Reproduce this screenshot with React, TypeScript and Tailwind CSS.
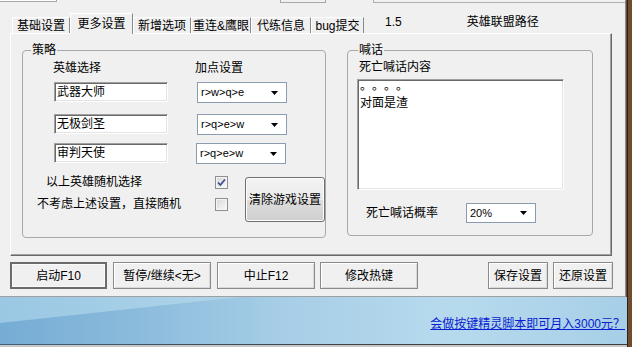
import React from 'react';

const font = "font-[family-name:'Liberation_Sans','Noto_Sans_CJK_SC',sans-serif]";

const sunken =
  'bg-white border-t border-l border-t-[#a0a0a0] border-l-[#a0a0a0] border-b border-r border-b-white border-r-white shadow-[inset_1px_1px_0_#696969,inset_-1px_-1px_0_#e3e3e3]';

const Combo: React.FC<{ value: string; className?: string }> = ({ value, className = '' }) => (
  <div className={`flex items-center justify-between bg-white border border-[#8a9cb0] pl-[3px] pr-[8px] text-[11px] leading-none ${className}`}>
    <span>{value}</span>
    <svg width="7" height="4" viewBox="0 0 7 4">
      <path d="M0 0h7L3.5 4z" fill="#000" />
    </svg>
  </div>
);

const Edit: React.FC<{ value: string; className?: string }> = ({ value, className = '' }) => (
  <div className={`${sunken} w-[114px] h-[20px] pl-[2px] flex items-center text-[12px] ${className}`}>{value}</div>
);

const Check: React.FC<{ checked?: boolean }> = ({ checked }) => (
  <div className="w-[13px] h-[13px] border border-[#8e8f8f] bg-[linear-gradient(135deg,#d6d6d6,#fbfbfb)] shadow-[inset_0_0_0_1px_#f4f4f4] flex items-center justify-center shrink-0">
    {checked && (
      <svg width="11" height="11" viewBox="0 0 11 11">
        <path d="M2 5.5l2.3 2.5L9 2.5" fill="none" stroke="#3a4f8c" strokeWidth="1.8" />
      </svg>
    )}
  </div>
);

const tabs = [
  { label: '基础设置', w: 'w-[58px]' },
  { label: '更多设置', w: 'w-[63px]', active: true },
  { label: '新增选项', w: 'w-[58px]' },
  { label: '重连&鹰眼', w: 'w-[60px]' },
  { label: '代练信息', w: 'w-[60px]' },
  { label: 'bug提交', w: 'w-[53px]' },
];

const BottomButton: React.FC<{ label: string; w: string; main?: boolean; className?: string }> = ({ label, w, main, className = '' }) => (
  <button
    className={`${w} h-[27px] flex items-center justify-center text-[12px] bg-[#f0f0f0] ${
      main
        ? 'border-2 border-[#6b6b6b] shadow-[inset_0_0_0_1px_#fafafa]'
        : 'border border-[#8a8a8a] shadow-[inset_1px_1px_0_#fff,inset_-1px_-1px_0_#d8d8d8]'
    } ${className}`}
  >
    {label}
  </button>
);

export default function App() {
  return (
    <div className={`w-[632px] h-[347px] flex bg-[#6e4c2e] overflow-hidden text-black ${font}`}>
      <div className="w-[628px] flex flex-col border-r border-r-[#2e2218]">
        {/* main gray area */}
        <div className="h-[297px] w-[626px] bg-[#f0f0f0] border-r border-r-[#8c8c8c] border-b border-b-[#a0a0a0] flex flex-col pl-[10px]">
          {/* strip of clipped controls above */}
          <div className="h-[14px] -ml-[10px] flex items-start">
            <div className="w-[57px] h-[2px] bg-white border-b border-r border-[#a8a8a8]" />
            <div className="ml-[223px] w-[46px] h-[3px] border-l border-b border-r border-[#a8a8a8]" />
            <div className="ml-[47px] flex-1 h-[3px] border-l border-b border-[#b0b0b0]" />
          </div>

          {/* tab header */}
          <div className="h-[19px] flex items-end pl-[2px] text-[12px] leading-[14px]">
            {tabs.map((t) =>
              t.active ? (
                <div
                  key={t.label}
                  className={`${t.w} h-[21px] -mb-[1px] relative z-10 bg-[#f0f0f0] border-t border-l border-white border-r border-r-[#8a8a8a] flex items-center justify-center pb-[1px]`}
                >
                  {t.label}
                </div>
              ) : (
                <div
                  key={t.label}
                  className={`${t.w} h-[16px] border-t border-l border-white border-r border-r-[#8a8a8a] flex items-center justify-center`}
                >
                  {t.label}
                </div>
              )
            )}
            <span className="ml-[21px] mb-[4px]">1.5</span>
            <span className="ml-[65px] mb-[4px]">英雄联盟路径</span>
          </div>

          {/* tab panel */}
          <div className="w-[602px] h-[223px] border-t border-l border-white border-r border-b border-r-[#696969] border-b-[#696969] shadow-[inset_-1px_-1px_0_#a0a0a0] flex items-start pl-[11px] pt-[16px] text-[12px] leading-[14px]">
            {/* 策略 */}
            <div className="relative w-[304px] h-[188px] border border-[#a8a8a8] rounded-[4px]">
              <span className="absolute left-[8px] -top-[8px] px-[1px] bg-[#f0f0f0]">策略</span>
              <div className="flex mt-[10px]">
                <span className="ml-[30px] w-[142px]">英雄选择</span>
                <span>加点设置</span>
              </div>
              <div className="flex items-start mt-[7px]">
                <Edit value="武器大师" className="ml-[31px]" />
                <Combo value="r>w>q>e" className="ml-[29px] w-[90px] h-[21px]" />
              </div>
              <div className="flex items-start mt-[11px]">
                <Edit value="无极剑圣" className="ml-[31px]" />
                <Combo value="r>q>e>w" className="ml-[29px] w-[90px] h-[21px]" />
              </div>
              <div className="flex items-start mt-[8px]">
                <Edit value="审判天使" className="ml-[31px]" />
                <Combo value="r>q>e>w" className="ml-[28px] w-[90px] h-[21px]" />
              </div>
              <div className="flex items-start mt-[10px]">
                <div className="w-[228px] flex flex-col">
                  <div className="h-[16px] flex items-center pl-[23px]">
                    <span className="w-[169px]">以上英雄随机选择</span>
                    <Check checked />
                  </div>
                  <div className="h-[16px] flex items-center pl-[14px] mt-[6px]">
                    <span className="w-[178px]">不考虑上述设置，直接随机</span>
                    <Check />
                  </div>
                </div>
                <button className="ml-[8px] mt-[3px] w-[85px] h-[45px] rounded-[3px] border border-[#707070] bg-[linear-gradient(#f3f3f3_0%,#ebebeb_50%,#dddddd_51%,#cfcfcf_100%)] shadow-[inset_0_0_0_1px_#fcfcfc] text-[12px]">
                  清除游戏设置
                </button>
              </div>
            </div>

            {/* 喊话 */}
            <div className="relative ml-[21px] w-[246px] h-[186px] border border-[#a8a8a8] rounded-[4px]">
              <span className="absolute left-[10px] -top-[8px] px-[1px] bg-[#f0f0f0]">喊话</span>
              <div className="ml-[11px] mt-[9px]">死亡喊话内容</div>
              <div className={`${sunken} ml-[9px] mt-[5px] w-[207px] h-[111px] pl-[2px] pt-[2px] leading-[13px] font-[family-name:'Noto_Sans_CJK_SC',sans-serif]`}>
                <div className="flex relative -top-[4px] h-[13px]">
                  <span className="w-[12px]">。</span>
                  <span className="w-[12px]">。</span>
                  <span className="w-[12px]">。</span>
                  <span className="w-[12px]">。</span>
                </div>
                <div>对面是渣</div>
              </div>
              <div className="flex items-center mt-[13px] ml-[18px] h-[20px]">
                <span className="w-[100px]">死亡喊话概率</span>
                <Combo value="20%" className="w-[70px] h-[20px]" />
              </div>
            </div>
          </div>

          {/* bottom buttons */}
          <div className="flex mt-[6px]">
            <BottomButton label="启动F10" w="w-[97px]" main />
            <BottomButton label="暂停/继续<无>" w="w-[98px]" className="ml-[6px]" />
            <BottomButton label="中止F12" w="w-[98px]" className="ml-[6px]" />
            <BottomButton label="修改热键" w="w-[98px]" className="ml-[5px]" />
            <BottomButton label="保存设置" w="w-[60px]" className="ml-[70px]" />
            <BottomButton label="还原设置" w="w-[60px]" className="ml-[5px]" />
          </div>
        </div>

        {/* blue bar */}
        <div className="relative h-[48px] w-[627px] bg-[linear-gradient(90deg,#9ac7e3_0%,#b3d7eb_45%,#b8dbee_70%,#a6cfe7_100%)] border-b border-b-[#3d3d3d] flex items-center justify-end pr-[2px] pt-[6px]">
          <svg className="absolute inset-0" width="627" height="48" viewBox="0 0 627 48" preserveAspectRatio="none">
            <defs>
              <linearGradient id="shade" x1="0" x2="1" y1="0" y2="0">
                <stop offset="0" stopColor="#4a8cc2" stopOpacity="0.45" />
                <stop offset="0.45" stopColor="#4a8cc2" stopOpacity="0.12" />
                <stop offset="0.75" stopColor="#4a8cc2" stopOpacity="0" />
              </linearGradient>
            </defs>
            <polygon points="0,26 240,0 627,0 627,48 0,48" fill="url(#shade)" />
          </svg>
          <a className="relative text-[12px] leading-[14px] text-[#0a1ecf] underline">会做按键精灵脚本即可月入3000元？</a>
        </div>
        <div className="flex-1 bg-[#c8c8c8]" />
      </div>
    </div>
  );
}
